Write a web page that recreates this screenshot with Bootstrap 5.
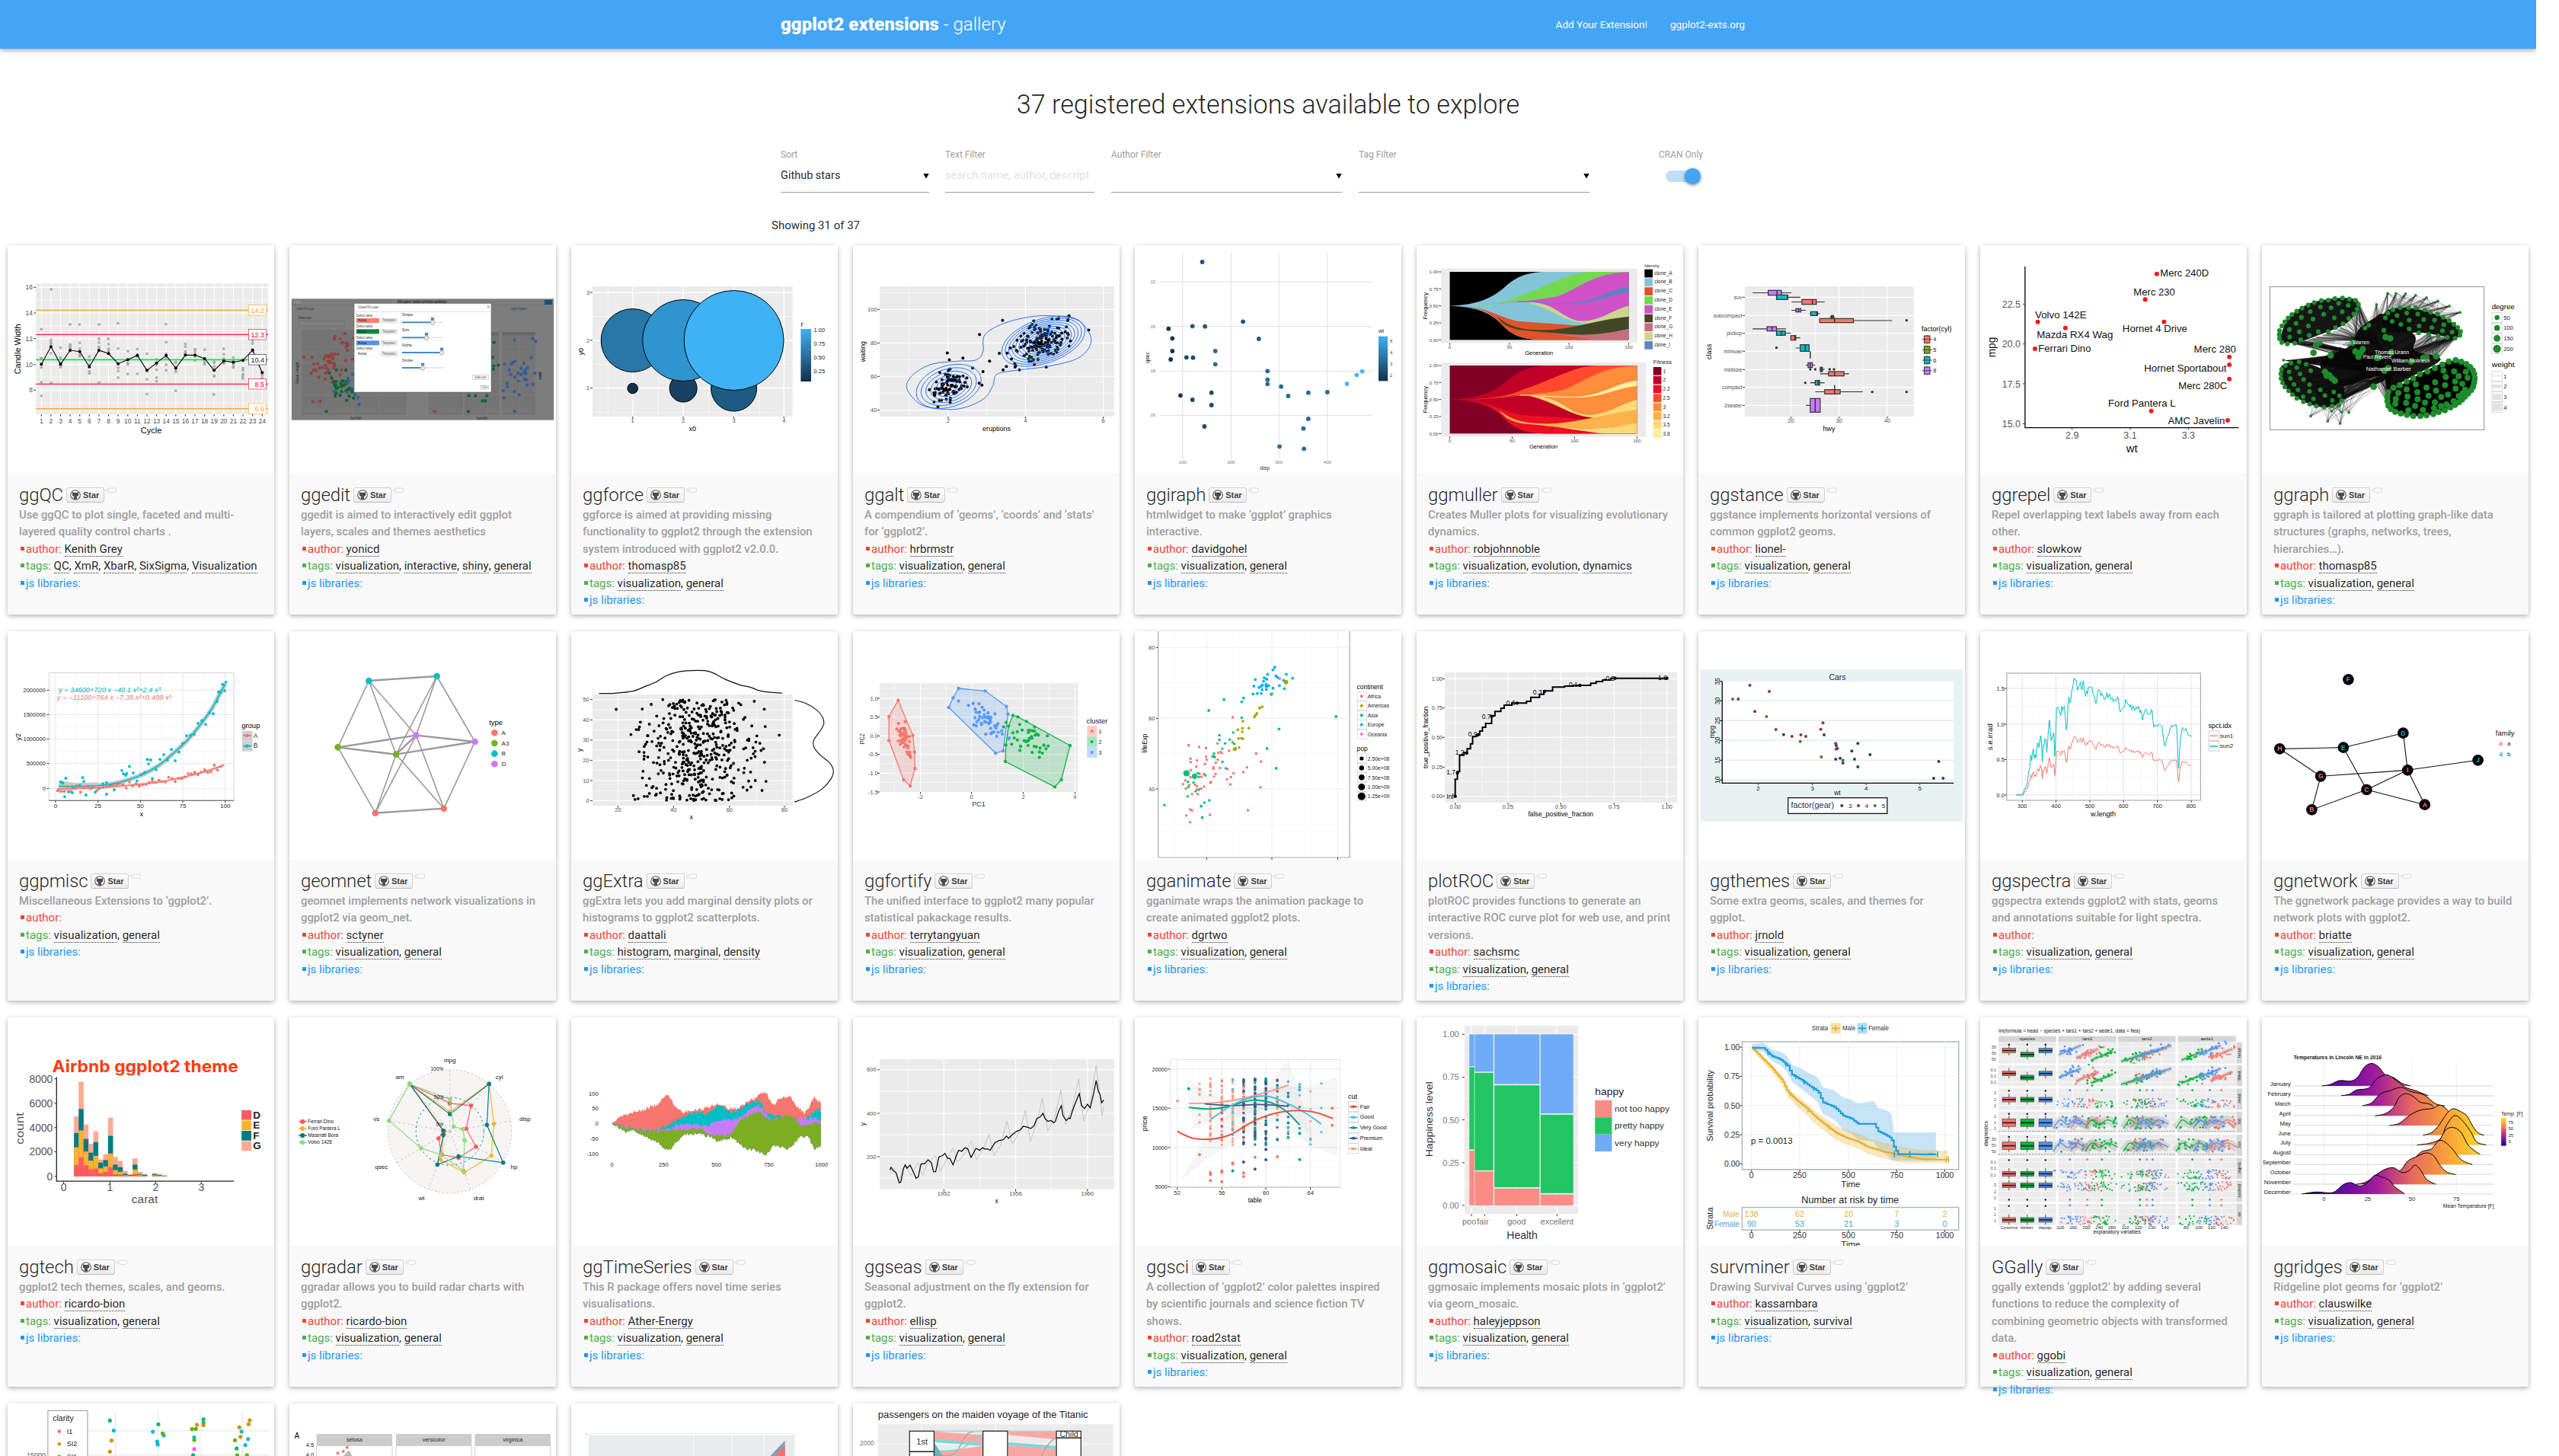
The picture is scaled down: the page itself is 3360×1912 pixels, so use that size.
<!DOCTYPE html>
<html lang="en">
<head>
<meta charset="utf-8">
<title>ggplot2 extensions - gallery</title>
<link href="https://cdn.jsdelivr.net/npm/bootstrap@5.3.0/dist/css/bootstrap.min.css" rel="stylesheet">
<style>
html,body{height:100%}
body{font-family:Roboto,"Liberation Sans",sans-serif;color:rgba(0,0,0,.87);font-size:15px;line-height:1.5;background:#fff}
.page{width:3330px;height:1912px}
.page>*{flex-shrink:0}
.topbar{height:64px;background:#42a5f5;box-shadow:0 2px 5px rgba(0,0,0,.22),0 2px 10px rgba(0,0,0,.16)}
.inner{width:1280px}
.topbar .inner{padding-right:14px}
.brand{font-size:24px;font-weight:300;line-height:65px;color:#fff;white-space:nowrap}
.brand b{font-weight:900}
.links a{font-size:13.5px;color:#fff;line-height:64px;white-space:nowrap}
.links a+a{margin-left:30px}
.headline{font-size:34.2px;font-weight:300;line-height:40px;margin-top:53px}
.filters{width:1280px;height:87px;margin-top:38px}
.fld{height:58px;border-bottom:1px solid #9e9e9e}
.fld label,.sw label{display:block;font-size:12px;line-height:16px;color:#9e9e9e;white-space:nowrap}
.fld .val{font-size:14.5px;line-height:20px;height:20px;margin-top:10px;overflow:hidden;white-space:nowrap}
.fld .ph{color:#e2e2e2}
.arr{width:8px;height:7px;background:#000;clip-path:polygon(0 0,100% 0,50% 100%)}
.track{width:38px;height:15px;border-radius:8px;background:#c0def4;margin:13px 0 0 9px}
.knob{width:21px;height:21px;border-radius:50%;background:#42a5f5;box-shadow:0 1px 4px rgba(0,0,0,.5);margin:-3px -8px 0 0;flex:none}
.showing{width:1304px;font-size:15px;line-height:23px;margin-top:3px;margin-bottom:1px}
.gallery{padding-top:13px}
.tile{width:350px;height:485px;margin:0 10px 22px 10px;background:#f9f9f9;border:0;border-radius:2px;box-shadow:0 2px 5px rgba(0,0,0,.2),0 2px 10px rgba(0,0,0,.13)}
.cell{width:370px;height:507px;flex:none}
.pic{height:300px;background:#fff;border-radius:2px 2px 0 0;overflow:hidden}
.pic svg{display:block}
.info{padding:12px 15px 0;white-space:nowrap}
.nm{font-size:24px;font-weight:300;line-height:33px;height:30.5px;letter-spacing:-.1px}
.star{width:50px;height:20px;border:1px solid #d0d0d0;border-bottom-color:#bbb;border-radius:3px;background:linear-gradient(#fcfcfc,#ececec);font:bold 11px/18px "Liberation Sans",sans-serif;color:#444;padding-left:4px;margin-top:6px}
.star svg{margin:2px 3px 0 0}
.bub{margin:6px 0 0 1px}
.ln{font-size:15px;line-height:22.5px;height:22.5px}
.dsc{color:#9e9e9e;font-weight:500;font-size:14.8px}
.ln a{color:#212121;text-decoration:none;border-bottom:1px dotted #333;line-height:19px;display:inline-block;height:19px}
.sq{display:inline-block;width:5px;height:5px;margin:0 2px 3px 2px}
.c-r{color:#f44336}.c-g{color:#4caf50}.c-b{color:#2196f3}
.c-r .sq{background:#f44336}.c-g .sq{background:#4caf50}.c-b .sq{background:#2196f3}
.pic text{font-family:"Liberation Sans",Arial,sans-serif}
</style>
</head>
<body>
<div class="page d-flex flex-column overflow-hidden">
  <nav class="topbar d-flex justify-content-center">
    <div class="inner d-flex justify-content-between">
      <div class="brand"><b>ggplot2 extensions</b> - gallery</div>
      <div class="links d-flex"><a class="text-decoration-none">Add Your Extension!</a><a class="text-decoration-none">ggplot2-exts.org</a></div>
    </div>
  </nav>
  <h1 class="headline text-center mb-0">37 registered extensions available to explore</h1>
  <div class="filters mx-auto d-flex align-items-start">
    <div class="fld" style="width:195px"><label>Sort</label><div class="val d-flex justify-content-between align-items-center">Github stars<span class="arr"></span></div></div>
    <div class="fld" style="width:196px;margin-left:21px"><label>Text Filter</label><div class="val ph">search name, author, descript</div></div>
    <div class="fld" style="width:303px;margin-left:22px"><label>Author Filter</label><div class="val d-flex justify-content-end align-items-center"><span class="arr"></span></div></div>
    <div class="fld" style="width:303px;margin-left:22px"><label>Tag Filter</label><div class="val d-flex justify-content-end align-items-center"><span class="arr"></span></div></div>
    <div class="sw" style="margin-left:91px"><label>CRAN Only</label><div class="track d-flex justify-content-end"><div class="knob"></div></div></div>
  </div>
  <div class="showing mx-auto">Showing 31 of 37</div>
  <div class="gallery d-flex flex-wrap" id="gallery"></div>
</div>
<script>
const gallery=document.getElementById('gallery');
let seed=7;
const rnd=()=>{seed=(seed*16807)%2147483647;return seed/2147483647};
const gs=()=>Math.sqrt(-2*Math.log(rnd()))*Math.cos(6.2832*rnd());
const pts=s=>typeof s==='string'?s.trim().split(/\s+/).map(a=>a.split(',').map(Number)):s;
const at=(s,x)=>{const a=pts(s);if(x<=a[0][0])return a[0][1];for(let i=1;i<a.length;i++)if(x<=a[i][0]){const t=(x-a[i-1][0])/(a[i][0]-a[i-1][0]);return a[i-1][1]+t*(a[i][1]-a[i-1][1])}return a[a.length-1][1]};
const noisy=(s,amp,step)=>{const a=pts(s),o=[];for(let x=a[0][0];x<=a[a.length-1][0];x+=step)o.push([x,at(a,x)+(rnd()-.5)*2*amp]);return o};
/* Plot surface: data units (ox,oy,sx,sy) are mapped onto the 350x300 picture. */
class Plot{
  constructor(ox,oy,sx,sy){Object.assign(this,{ox,oy,sx,sy,h:''})}
  X(x){return +((x-this.ox)/this.sx).toFixed(2)}
  Y(y){return +((y-this.oy)/this.sy).toFixed(2)}
  P(s){return pts(s).map(a=>this.X(a[0])+','+this.Y(a[1])).join(' ')}
  r(a,b,c,d,f,st='none',w=1,o=1){this.h+=`<rect x="${this.X(a)}" y="${this.Y(b)}" width="${((c-a)/this.sx).toFixed(2)}" height="${((d-b)/this.sy).toFixed(2)}" fill="${f}" stroke="${st}" stroke-width="${w}" opacity="${o}"/>`}
  l(s,st='#000',w=1,dash='',o=1){this.h+=`<polyline points="${this.P(s)}" fill="none" stroke="${st}" stroke-width="${w}" stroke-dasharray="${dash}" opacity="${o}"/>`}
  pg(s,f,st='none',w=1,o=1){this.h+=`<polygon points="${this.P(s)}" fill="${f}" stroke="${st}" stroke-width="${w}" fill-opacity="${o}"/>`}
  d(x,y,r,f,o=1,st='none'){this.h+=`<circle cx="${this.X(x)}" cy="${this.Y(y)}" r="${r}" fill="${f}" stroke="${st}" opacity="${o}"/>`}
  ds(s,r,f,o=1){pts(s).forEach(a=>this.d(a[0],a[1],r,f,o))}
  cl(n,cx,cy,dx,dy,r,f,rho=0,o=1){for(let i=0;i<n;i++){const u=gs(),v=gs();this.d(cx+dx*u,cy+dy*(rho*u+Math.sqrt(1-rho*rho)*v),r,f,o)}}
  un(n,a,b,c,d,r,f,o=1){for(let i=0;i<n;i++)this.d(a+(c-a)*rnd(),b+(d-b)*rnd(),r,f,o)}
  s(s,st='#000',w=1,f='none',close=false,o=1,dash=''){const a=pts(s).map(q=>[this.X(q[0]),this.Y(q[1])]),n=a.length,g=i=>close?a[(i+n)%n]:a[Math.max(0,Math.min(n-1,i))];let d='M'+a[0];for(let i=0;i<(close?n:n-1);i++){const p0=g(i-1),p1=g(i),p2=g(i+1),p3=g(i+2);d+=`C${p1[0]+(p2[0]-p0[0])/6},${p1[1]+(p2[1]-p0[1])/6} ${p2[0]-(p3[0]-p1[0])/6},${p2[1]-(p3[1]-p1[1])/6} ${p2}`}this.h+=`<path d="${d}" fill="${f}" stroke="${st}" stroke-width="${w}" opacity="${o}" stroke-dasharray="${dash}"/>`}
  pa(d,f,x=''){this.h+=`<path d="${d}" fill="${f}" transform="scale(${1/this.sx} ${1/this.sy}) translate(${-this.ox} ${-this.oy}) ${x}"/>`}
  el(x,y,rx,ry,rot,f,st,w=1,o=1){this.h+=`<ellipse rx="${rx}" ry="${ry}" transform="translate(${this.X(x)} ${this.Y(y)}) rotate(${rot})" fill="${f}" stroke="${st}" stroke-width="${w}" opacity="${o}"/>`}
  t(x,y,s,z=8,f='#4d4d4d',an='start',w=0,ex=''){this.h+=`<text x="${this.X(x)}" y="${this.Y(y)}" font-size="${z}" fill="${f}" text-anchor="${an}" ${w?`textLength="${(w/this.sx).toFixed(1)}" lengthAdjust="spacingAndGlyphs"`:''} ${ex}>${s}</text>`}
  v(x,y,s,z=9,f='#000',len=0,ex=''){this.h+=`<text transform="translate(${this.X(x)} ${this.Y(y)}) rotate(-90)" font-size="${z}" fill="${f}" text-anchor="middle" ${len?`textLength="${(len/this.sy).toFixed(1)}" lengthAdjust="spacingAndGlyphs"`:''} ${ex}>${s}</text>`}
  vg(xs,a,b,c='#fff',w=1){xs.forEach(x=>this.l([[x,a],[x,b]],c,w))}
  hg(ys,a,b,c='#fff',w=1){ys.forEach(y=>this.l([[a,y],[b,y]],c,w))}
  xt(xs,ls,y,z=7,c='#4d4d4d',tick=0){xs.forEach((x,i)=>{this.t(x,y,ls[i],z,c,'middle');if(tick)this.l([[x,tick],[x,tick+8]],'#333',1)})}
  yt(x,ys,ls,z=7,c='#4d4d4d',tick=0){ys.forEach((y,i)=>{this.t(x,y+z*.36*this.sy,ls[i],z,c,'end');if(tick)this.l([[tick-4,y],[tick,y]],'#333',1)})}
  bar(a,b,c,d,id,c1,c2){this.h+=`<defs><linearGradient id="${id}" x2="0" y2="1"><stop stop-color="${c1}"/><stop offset="1" stop-color="${c2}"/></linearGradient></defs>`;this.r(a,b,c,d,`url(#${id})`)}
}
const seq=(a,n,s)=>Array.from({length:n},(_,i)=>a+i*s);
const RED='#f8766d',GRN='#7cae00',TEAL='#00bfc4',PUR='#c77cff',BG='#ebebeb';

const draw={
ggQC(p){
 p.r(66,186,493,702,BG);const xs=seq(76,24,17.65);p.vg(xs,186,702);p.hg([202,303,404,506,607],66,493,'#fff',1.4);p.hg([253,354,455,556,657],66,493,'#fff',.6);
 const m=[505,436,505,450,455,515,450,463,503,487,470,529,500,470,520,469,469,483,529,492,497,490,449,538];
 xs.forEach((x,i)=>{for(let k=0;k<5;k++)p.d(x,m[i]+gs()*32,1.9,'#aaa',.9)});
 p.ds('94,210 76,367 129,348 146,348 182,348 217,343 305,347 182,405 199,405 393,624 323,609 76,576 94,579 182,577 446,553',1.9,'#b0b0b0');
 p.hg([292,680],66,493,'#ffa21c',1.2);p.hg([388,583],66,493,'#ff1a2c',1.2);p.hg([487],66,493,'#00ee3c',1.6);
 p.l(m.map((y,i)=>[xs[i],y]),'#000',1.1);m.forEach((y,i)=>p.d(xs[i],y,2,'#000'));
 [[292,'14.2','#ffa21c'],[388,'12.3','#f02'],[487,'10.4','#222'],[583,'8.5','#f02'],[680,'6.6','#ffa21c']].forEach(([y,s,c])=>{p.r(457,y-20,489,y+20,'#fff',c,.6);p.t(486,y+10,s,9,c,'end')});
 p.xt(xs,seq(1,24,1),738,8.4,'#4d4d4d',702);p.yt(60,[202,303,404,506,607],[16,14,12,10,8],8.4,'#4d4d4d',66);
 p.t(278,777,'Cycle',11,'#000','middle');p.v(38,445,'Candle Width',11,'#000',198)},
ggedit(p){
 p.r(536,247,1018,725,'#7d7d7d');p.r(536,270,1018,272,'#727272');p.r(555,370,747,705,'#747474');[[788,851],[854,917],[923,984]].forEach(([a,b])=>{p.r(a,378,b,705,'#747474');p.r(a,378,b,391,'#686868')});
 p.vg([600,649,697,819,871,897,955],391,705,'#7f7f7f',.7);p.hg([435,500,562,626,690],555,984,'#7f7f7f',.7);
 p.r(538,252,556,268,'#8a8a8a','#666',.5);p.r(1001,251,1015,270,'#1f4f74');p.t(776,264,'Edit ggplot, themes and layer aesthetics',6,'#222','middle',90,'font-weight="bold"');p.t(545,292,'Update Plot Layer',5,'#24425c','start',32);p.t(939,291,'Layer Updates',5,'#24425c','start',30);
 p.t(548,327,'Choose a plot',5,'#222','start',24);p.r(549,334,633,354,'#808080','#666',.5);
 p.cl(42,600,505,22,45,2.2,'#96423d',-.4);p.cl(10,625,430,12,30,2.2,'#96423d');p.cl(34,632,585,18,35,2.2,'#0c6632');p.cl(16,655,600,18,35,2.2,'#345e9c');p.cl(30,957,545,16,55,2.2,'#345e9c');p.cl(6,910,470,4,30,2.2,'#0c6632');p.ds('862,629 874,629 895,629 887,649 892,649 861,691 600,691',2.2,'#0c6632');p.ds('799,691 634,384 575,652',2.2,'#96423d');p.ds('979,404 926,637 946,691',2.2,'#345e9c');
 ['#7a2d29','#0c6632','#345e9c'].forEach((c,i)=>p.d(993,541+i*10,2,c));p.t(654,722,'Sepal.Width',5,'#222','middle',20);p.t(886,722,'Sepal.Width',5,'#222','middle',20);p.v(549,540,'Sepal.Length',5,'#222');
 p.r(651,265,903,615,'#fff','#555',.5);p.t(658,286,'Update Plot Layer',6,'#444','start',38);p.t(895,285,'×',7,'#777');p.hg([298],651,903,'#ddd');
 [[317,'#ff7b70'],[360,'#008a3c'],[405,'#5590e8'],[448,'#fff']].forEach(([y,c])=>{p.t(655,y,'Select value',5,'#333','start',30);p.r(655,y+7,697,y+25,c,c=='#fff'?'#eee':'none',.5);p.t(658,y+20,'#setosa',5,'#222','start',16);p.r(700,y+7,730,y+25,'#eee','#ccc',.5);p.t(703,y+20,'Transparent',4.5,'#555','start',24)});
 [[316,795,'Shape'],[376,784,'Size'],[435,812,'Alpha'],[495,777,'Stroke']].forEach(([y,x,s])=>{p.t(739,y,s,5,'#333');p.r(739,y+22,815,y+26,'#ddd');p.r(739,y+21,x,y+27,'#428bca');p.r(x-3,y+5,x+3,y+16,'#428bca');p.d(x,y+25,2.6,'#eee',1,'#aaa');p.vg(seq(742,9,9),y+35,y+39,'#bbb',.6)});
 p.r(869,547,898,566,'#fff','#bbb',.6);p.t(872,560,'Update Layer',5,'#444','start',22);p.r(883,589,898,603,'#fff','#bbb',.6);p.t(885,599,'Close',5,'#2a7b9b','start',11)},
ggforce(p){
 p.r(1089,198,1457,711,BG);p.vg([1118,1210,1303,1396],198,711,'#fff',.6);p.hg([317,505,694],1089,1457,'#fff',.6);p.vg([1163,1256,1349,1441],198,711,'#fff',1.3);p.hg([222,411,599],1089,1457,'#fff',1.3);
 [[1163,600,6.8,'#13314c'],[1256,600,18,'#184260'],[1349,600,30,'#1d5b83'],[1163,411,41.5,'#2777a7'],[1256,411,53.5,'#3094cf'],[1349,411,65.5,'#3eb2f4']].forEach(a=>p.d(a[0],a[1],a[2],a[3],1,'#000'));
 p.xt([1163,1256,1349,1441],[1,2,3,4],736,7.5,'#4d4d4d',711);p.yt(1084,[222,411,599],[3,2,1],7.5,'#4d4d4d',1089);p.t(1273,768,'x0',9,'#000','middle');p.v(1073,455,'y0',9);
 p.t(1472,357,'r',9,'#000');p.bar(1472,366,1491,573,'gf','#3eb2f4','#12304a');[[378,'1.00'],[432,'0.75'],[486,'0.50'],[540,'0.25']].forEach(a=>p.t(1496,a[0],a[1],7.5,'#222'))},
ggalt(p){
 p.r(63,198,494,711,BG);p.vg([117,260,403],198,711,'#fff',.6);p.hg([223,355,487,619],63,494,'#fff',.6);p.vg([189,331,474],198,711,'#fff',1.2);p.hg([289,421,553,686],63,494,'#fff',1.2);
 p.cl(165,362,416,27,36,2,'#000',-.35);p.cl(92,191,590,16,33,2,'#000',-.2);p.ds('216,481 265,493 283,462 296,514 290,527 320,527 253,534 246,580 251,587 411,315 389,328 234,520',2,'#000');
 const b='#2a73f0';
 p.s('113,600 125,545 160,504 205,493 240,488 253,455 256,390 290,345 340,318 385,315 430,335 452,410 430,478 375,512 310,530 278,545 271,590 255,640 220,675 185,683 140,665',b,1,'none',true);
 for(let i=0;i<6;i++)p.el(190,592+i,(44-i*6.5),(27-i*3.9),-18,'none',b,.9);
 for(let i=0;i<11;i++)p.el(364,414,57-i*4.7,29-i*2.35,-19,'none',b,.9);
 p.xt([189,331,474],[2,4,6],736,7.5,'#4d4d4d',711);p.yt(58,[289,421,553,686],[100,80,60,40],7.5,'#4d4d4d',63);p.t(278,768,'eruptions',9,'#000','middle');p.v(37,455,'waiting',9,'#000',82)},
ggiraph(p){
 p.vg([620,709,797,886],66,880,'#e0e0e0');p.hg([181,356,532,706],576,969,'#e0e0e0');
 p.ds('656,102 731,337 638,355 661,356 760,405',2.9,'#25587d');p.ds('594,365 601,403 601,453 598,486 616,628',2.9,'#15364f');p.ds('627,478 639,479 638,645 660,750 673,617 673,666',2.9,'#1f4b6b');p.ds('680,453 680,505 776,532 776,566 776,583 801,593 814,630 851,617 886,615 851,720 842,758 798,829 843,838',2.9,'#2b6a94');p.ds('950,533 940,547 922,582',2.9,'#4fb9f7');
 p.xt([620,709,797,886],[100,200,300,400],898,6,'#777');p.yt(570,[181,356,532,706],[22,20,18,16],6,'#777');p.t(771,920,'disp',7,'#333','middle');p.v(558,478,'qsec',7);
 p.t(980,382,'wt',7,'#222');p.bar(980,395,997,571,'gi','#3eb2f4','#12304a');[[421,5],[465,4],[511,3],[556,2]].forEach(a=>p.t(1001,a[0],a[1],6,'#444'))},
ggmuller(p){
 const tops='M1111,275 C1165,272 1190,240 1210,205 C1230,165 1250,141 1290,141 L1440,141 L1440,409 L1290,409 C1240,409 1225,390 1205,345 C1180,290 1150,278 1111,275Z';
 const S=[tops,'M1135,277 C1180,280 1200,320 1235,335 C1270,340 1300,345 1340,352 C1360,352 1370,350 1400,345 L1440,409 L1290,409 C1240,409 1225,390 1205,345 C1190,310 1170,282 1135,277Z','M1150,275 C1190,268 1220,260 1240,235 C1290,200 1330,141 1370,141 L1440,141 L1440,143 C1380,150 1350,200 1325,225 C1290,255 1250,252 1210,262 C1190,270 1170,274 1150,275Z','M1180,272 C1250,252 1300,250 1320,228 C1350,200 1380,145 1440,142 L1440,275 C1410,290 1390,333 1355,335 C1320,333 1310,270 1265,262 C1240,257 1220,262 1180,272Z','M1235,256 C1290,262 1310,263 1330,264 C1380,262 1400,210 1440,200 L1440,222 C1400,232 1380,268 1330,267 C1300,267 1270,262 1235,258Z','M1250,260 C1300,285 1320,340 1365,346 C1400,340 1410,325 1440,317 L1440,275 C1410,290 1390,333 1355,335 C1320,333 1310,270 1265,262Z','M1198,318 C1220,355 1240,372 1290,370 C1340,365 1380,330 1440,317 L1440,366 C1400,385 1370,390 1350,389 C1300,385 1270,375 1240,370 C1215,360 1205,340 1198,318Z','M1230,368 C1280,375 1310,388 1350,389 C1380,390 1410,380 1440,366 L1440,409 L1380,409 C1340,400 1300,378 1230,368Z'];
 const A=['#84c4d8','#e0532a','#72d94f','#d050c8','#5a84c4','#cdd48c','#414626','#c76e7e'],B=['#c20026','#ec0f23','#fd4a2c','#fe8d3c','#fff0a0','#fed976','#feb24c','#fed976'];
 p.r(1095,128,1456,421,BG);p.r(1111,141,1440,409,'#000');S.forEach((d,i)=>p.pa(d,A[i]));
 p.r(1095,498,1472,790,BG);p.r(1111,510,1455,778,'#800026');S.forEach((d,i)=>p.pa(d,B[i],'translate(1111 369) scale(1.0456 1) translate(-1111 0)'));
 [[0,329],[369,344]].forEach(([o,w],k)=>{p.xt([0,1/3,2/3,1].map(f=>1111+w*f),[0,50,100,150],444+o,6.2,'#4d4d4d',421+o);p.yt(1090,[141,208,275,342,409].map(y=>y+o),['1.00','0.75','0.50','0.25','0.00'],6.2,'#4d4d4d',1095);p.t(1275+k*8,469+o,'Generation',7.5,'#000','middle');p.v(1070,275+o,'Frequency',8,'#000',106)});
 ['#000','#84c4d8','#e0532a','#72d94f','#d050c8','#414626','#c76e7e','#cdd48c','#5a84c4'].forEach((c,i)=>{p.r(1469,131+i*35.4,1484,163+i*35.4,c);p.t(1487,152+i*35.4,'clone_'+'ABCDEFGHI'[i],6.5,'#222')});p.t(1469,122,'Identity',6,'#222');
 p.t(1485,505,'Fitness',7.5,'#222');['#800026','#c20026','#ec0f23','#fd4a2c','#fe8d3c','#feb24c','#fed976','#ffeda0'].forEach((c,i)=>{p.r(1485,516+i*35.4,1500,548+i*35.4,c);p.t(1503,539+i*35.4,[1,2,2.2,2.5,3,3.2,3.5,3.8][i],6.5,'#222')})},
ggstance(p){
 p.r(98,198,403,711,BG);p.vg([138,225,311],198,711,'#fff',.6);p.vg([181,268,355],198,711,'#fff',1.2);p.hg([241,313,383,454,526,596,667],98,403,'#fff',1.2);
 [[112,182,140,164,156,214,233,PUR],[155,198,155,175,175,232,250,TEAL],[182,242,201,227,220,250,269,RED],[182,208,190,199,195,286,299,PUR],[215,233,217,229,228,298,313,TEAL],[251,260,254,258,256,313,325,GRN],[233,364,233,294,260,325,341,RED],[112,172,138,155,147,357,374,PUR],[155,181,155,171,164,374,391,TEAL],[181,198,181,190,188,392,410,RED],[190,214,198,214,207,428,454,TEAL],[208,225,212,220,216,499,518,PUR],[233,242,234,238,236,517,534,TEAL],[234,286,249,277,260,534,551,RED],[216,242,225,233,230,569,587,TEAL],[225,311,242,270,260,605,622,RED],[208,233,216,234,225,640,694,PUR]].forEach(([a,b,c,d,m,y1,y2,f])=>{p.l([[a,(y1+y2)/2],[b,(y1+y2)/2]],'#333',1.2);p.r(c,y1,d,y2,f,'#333',1.2);p.l([[m,y1],[m,y2]],'#333',1.5)});
 p.l('216,454 216,482','#333',1.5);p.l('260,587 260,605','#333',1.5);p.ds('390,332 155,440 216,525 225,525 251,525 259,525 207,578 328,614 390,614',1.7,'#333');
 p.xt([181,268,355],[20,30,40],736,7.5,'#4d4d4d',711);p.yt(93,[241,313,383,454,526,596,667],['suv','subcompact','pickup','minivan','midsize','compact','2seater'],7,'#4d4d4d',98);p.t(250,768,'hwy',9,'#000','middle');p.v(37,455,'class',9);
 p.t(417,376,'factor(cyl)',9,'#000');[RED,GRN,TEAL,PUR].forEach((c,i)=>{const y=407+i*41;p.r(418,y-18,436,y+18,'#f2f2f2');p.l([[427,y-17],[427,y+17]],'#333');p.r(422,y-14,432,y+14,c,'#333');p.l([[418,y],[436,y]],'#333',.8);p.t(438,y+8,[4,5,6,8][i],7.5,'#222')})},
ggrepel(p){
 p.l('604,120 604,755 990,755','#000',1.3);p.ds('842,149 821,250 627,338 677,362 855,338 622,444 973,476 973,507 973,563 832,689 970,726',3,'#f8191c');
 [[848,160,'Merc 240D',88],[800,235,'Merc 230',75],[622,323,'Volvo 142E',93],[780,378,'Hornet 4 Drive',117],[625,402,'Mazda RX4 Wag',138],[628,456,'Ferrari Dino',95],[909,460,'Merc 280',76],[819,535,'Hornet Sportabout',149],[881,602,'Merc 280C',88],[754,673,'Ford Pantera L',122],[862,740,'AMC Javelin',103]].forEach(a=>p.t(a[0],a[1],a[2],13,'#111','start',a[3]));
 p.xt([689,794,899],[2.9,3.1,3.3],799,12.5,'#555',755);p.yt(596,[268,425,582,739],['22.5','20.0','17.5','15.0'],12.5,'#555',604);p.t(797,851,'wt',15,'#111','middle');p.v(550,438,'mpg',15,'#111',80)},
ggraph(p){
 Object.assign(p,{ox:0,oy:-114,sx:3,sy:3});const g='#1d8b2b';
 p.r(31,50,875,613,'#fff','#777',.8);
 const fan=(tips,a,b,c,d,n,o)=>pts(tips).forEach(q=>{for(let i=0;i<n;i++)p.l([q,[a+(c-a)*rnd(),b+(d-b)*rnd()]],'#222',.8,'',o)});
 const span=(a,b,n,o)=>{const A=pts(a),B=pts(b);for(let i=0;i<n;i++){const u=rnd()*(A.length-1),v=rnd()*(B.length-1),k=u|0,m=v|0,e=u-k,f=v-m;p.l([[A[k][0]+(A[k+1][0]-A[k][0])*e,A[k][1]+(A[k+1][1]-A[k][1])*e],[B[m][0]+(B[m+1][0]-B[m][0])*f,B[m][1]+(B[m+1][1]-B[m][1])*f]],'#111',.8,'',o)}};
 fan('495,76 528,76 565,78 605,84 648,93 693,106 738,126 780,151 451,120',390,180,500,340,16,.3);
 fan('495,76 528,76 565,78 605,84 648,93 693,106 738,126 780,151',500,120,760,200,5,.3);
 fan('192,559 259,579 308,588 274,540 314,544 342,545',200,430,440,500,9,.35);
 span('375,100 378,140 300,220 150,270','360,260 420,250 480,300',150,.32);
 span('70,240 130,275 230,270','350,300 450,330 500,380',90,.3);
 span('90,340 140,345 240,330 360,250','400,300 480,340 480,400',160,.5);
 span('780,235 760,250 640,240','480,330 560,340 700,330',160,.35);
 span('310,500 250,510 150,400','440,300 500,380 480,420',170,.45);
 span('490,500 500,450 600,400','380,330 480,360 520,330',150,.45);
 p.s('350,280 380,220 440,175 485,160 600,240 600,300 690,325 690,350 560,420 500,470 480,405 420,410 300,440 230,350','none',0,'#050505',true,.93);
 p.s('85,210 110,165 190,115 290,95 370,100 378,135 330,195 210,245 130,270 75,265','none',0,'#0a0a0a',true,.95);
 p.s('485,150 560,132 650,148 740,185 785,230 760,250 640,232 560,230 480,220','none',0,'#080808',true,.95);
 p.s('80,360 145,345 250,380 320,440 310,500 250,525 170,505 100,455 72,400','none',0,'#0a0a0a',true,.95);
 p.s('500,470 560,430 700,355 780,345 840,400 820,460 740,525 640,558 550,550 495,520','none',0,'#000',true);
 p.ds('78,204 90,188 103,173 118,159 137,146 158,134 182,122 206,112 234,104 261,102 287,96 317,94 344,98 368,103 380,119 375,138 362,157 342,174 319,195 290,210 261,227 222,227 186,241 153,258 129,272 100,275 78,269 69,254 68,238 69,222 108,218 109,248 134,194 147,227 155,170 183,204 190,147 201,177 230,129 243,158 272,132 285,172 302,115 316,148 340,123',3.1,g);
 p.ds('496,153 516,140 545,132 578,132 606,132 642,141 664,150 692,157 714,170 738,183 756,197 771,210 782,226 780,241 761,252 730,249 694,244 656,237 618,231 580,216 547,198 513,186 486,172 480,221 532,163 570,153 580,181 614,157 619,204 637,179 669,210 680,181 711,223 716,199 749,228',3.1,g);
 p.ds('92,360 115,350 146,346 174,355 77,375 74,393 75,411 81,428 90,445 105,460 120,475 137,490 163,503 188,512 214,520 244,524 276,520 303,516 314,498 305,479 283,464 230,456 187,435 192,380 150,393 137,368 107,385 112,411 126,434 142,456 164,415 162,483 187,462 203,491 248,478 277,497',3,g);
 p.ds('497,466 518,448 543,437 570,423 596,411 622,394 652,383 681,370 711,356 736,344 763,339 785,345 805,354 820,366 830,379 836,394 838,411 836,427 832,443 824,457 812,470 800,482 788,494 776,505 760,515 742,525 720,536 696,543 675,551 648,556 624,559 596,559 571,554 547,549 525,542 508,532 498,518 494,500 494,484 527,491 537,468 570,454 573,482 606,434 612,465 613,493 648,447 656,479 682,426 686,459 681,505 706,484 715,380 721,437 724,405 727,513 733,475 757,383 761,423 763,451 775,402 789,432 803,385 810,408 800,455 525,511 568,507 577,536 603,519 634,535 642,506 678,528 705,520 790,470 775,480 755,500',4,g);
 p.ds('355,271 397,296 388,310 368,305 380,325 510,308 453,330 460,328 487,248 505,253 271,320 248,385 255,400 265,398 275,410 287,420 588,344 636,330 647,328 686,323 497,370 482,380 440,444 203,310 213,279',4.3,g);p.ds('230,272 421,201 406,212',3,g);
 p.ds('495,76 528,76 565,78 605,84 648,93 693,106 738,126 780,151 451,120 192,559 259,579 308,588 274,540 314,544 342,545 85,339',1.9,g);
 [[285,276,'Joseph Warren',138],[444,315,'Thomas Urann',135],[398,334,'Paul Revere',112],[510,349,'William Molineux',152],[410,380,'Nathaniel Barber',178]].forEach(a=>p.t(a[0],a[1],a[2],6.4,'#fff','start',a[3]));
 p.t(905,139,'degree',9,'#000','start',90);[50,100,150,200].forEach((s,i)=>{p.r(906,152+i*41,946,191+i*41,'#fff','#ccc',.8);p.d(926,171+i*41,3.2+i*.65,g);p.t(952,179+i*41,s,7.5,'#222')});
 p.t(905,367,'weight',9,'#000','start',90);[1,2,3,4].forEach((s,i)=>{p.r(906,382+i*41,946,421+i*41,'#fff','#ccc',.8);const k=[2,7,12,15][i];p.r(909,401+i*41-k,943,401+i*41+k,'#e3e3e3');p.t(952,410+i*41,s,7.5,'#222')})},
ggpmisc(p){
 p.r(90,191,430,693,'#fff','#c8c8c8',.8);p.vg([102,180,258,336,414],191,693,'#e6e6e6');p.hg([259,355,452,548,646],90,430,'#e6e6e6');p.vg([141,219,297,375],191,693,'#f4f4f4',.7);p.hg([210,307,403,500,597],90,430,'#f4f4f4',.7);p.l('90,694 430,694','#777',1.2);
 const T='108,638 150,638 190,633 220,622 258,595 290,558 320,505 345,455 370,390 390,330 405,270 414,235',R='105,648 180,643 240,633 290,622 330,605 370,584 400,563 412,553';
 p.s(T,'#c9c9c9',6);p.pg('108,615 140,625 180,622 180,646 140,650 108,662','#c9c9c9');p.s(R,'#ddd',3);p.s(T,TEAL,1.7);p.s(R,RED,1.7);
 for(let x=112;x<414;x+=7)p.d(x,at(T,x)+gs()*17,1.9,TEAL);for(let x=106;x<412;x+=6)p.d(x,at(R,x)+gs()*7,1.9,RED);p.ds('121,606 133,663 152,604 158,672 196,669 115,625 271,532 277,534 227,589 233,587 415,228 409,236 402,266',2,TEAL);
 p.t(108,266,'y = 34600+720 x −40.1 x²+2.4 x³',9,'#00b2b8','start',187,'font-style="italic"');p.t(105,296,'y = −11100+764 x −7.39 x²+0.499 x³',9,RED,'start',210,'font-style="italic"');
 p.xt([102,180,258,336,414],[0,25,50,75,100],724,8,'#222',694);p.yt(84,[259,355,452,548,646],['2000000','1500000','1000000','500000','0'],7.6,'#222',90);p.t(260,756,'x',9,'#000','middle');p.v(38,443,'y2',9);
 p.t(444,408,'group',9.5,'#000');[RED,TEAL].forEach((c,i)=>{p.r(445,419+i*41,464,459+i*41,'#cfcfcf');p.l([[447,438+i*41],[462,438+i*41]],c,2);p.d(454,438+i*41,2.2,c);p.t(466,446+i*41,'AB'[i],8.5,'#222')})},
geomnet(p){
 ['678,222 803,204','621,484 765,437','765,437 873,462','621,484 728,512','728,512 873,462','690,743 816,725','765,437 728,512'].forEach(s=>p.l(s,'#999',2.4));
 ['678,222 621,484','678,222 765,437','678,222 728,512','803,204 873,462','803,204 765,437','803,204 728,512','621,484 690,743','765,437 690,743','728,512 690,743','765,437 816,725','728,512 816,725','873,462 816,725'].forEach(s=>p.l(s,'#999',1.6));
 p.ds('678,222 803,204',4.3,TEAL);p.ds('765,437 873,462',4.3,PUR);p.ds('621,484 728,512',4.3,'#78b026');p.ds('690,743 816,725',4.3,RED);
 p.t(899,396,'type',9.5,'#000');[[RED,'A'],['#78b026','A3'],[TEAL,'B'],[PUR,'D']].forEach(([c,s],i)=>{p.d(909,427+i*41,4.3,c);p.t(922,435+i*41,s,8,'#222')})},
ggExtra(p){
 p.r(1089,276,1457,714,BG);p.vg([1187,1289,1391],276,714,'#fff',.6);p.hg([336,416,495,575,655],1089,1457,'#fff',.6);p.vg([1136,1238,1341,1442],276,714,'#fff',1.2);p.hg([296,376,455,535,615,694],1089,1457,'#fff',1.2);
 for(let i=0;i<460;i++){let x=1285+gs()*52;if(x<1105||x>1445)x=1285;p.d(x,296+rnd()*398,1.9,'#000')}
 p.s('1101,272 1130,271 1165,262 1185,245 1205,228 1225,202 1245,188 1270,182 1295,182 1310,190 1335,218 1360,238 1380,248 1400,263 1438,271','#111',1.2);
 p.s('1461,298 1480,310 1500,335 1512,365 1514,395 1504,430 1496,455 1496,482 1508,515 1525,545 1532,578 1527,610 1510,650 1485,680 1460,700','#111',1.1);
 p.xt([1136,1238,1341,1442],[20,40,60,80],739,7.5,'#4d4d4d',714);p.yt(1083,[296,376,455,535,615,694],[50,40,30,20,10,0],7.5,'#4d4d4d',1089);p.t(1271,769,'x',9,'#000','middle');p.v(1069,495,'y',9)},
ggfortify(p){
 p.r(63,232,428,660,BG);p.vg([90,185,280,374],232,660,'#fff',.6);p.hg([254,328,402,475,549,622],63,428,'#fff',.6);p.vg([138,232,327,422],232,660,'#fff',1.2);p.hg([291,365,439,512,586],63,428,'#fff',1.2);
 [['80,363 97,299 124,437 127,503 128,567 119,636 107,612 80,457',RED],['208,252 257,262 296,323 299,353 290,498 276,507 190,327 198,289','#5499fb'],['308,358 317,364 413,477 397,612 385,640 294,540 295,475 300,400','#0cb548']].forEach(([s,c])=>{p.pg(s,c,c,1.3,.2);p.ds(s,2.2,c)});
 p.cl(48,107,450,6,42,2.1,RED,.5);p.cl(48,262,390,18,38,2.1,'#5499fb',.6);p.cl(44,338,455,21,36,2.1,'#0cb548',.5);
 p.xt([138,232,327,422],[-2,0,2,4],687,7.5,'#4d4d4d',660);p.yt(60,[291,365,439,512,586,660],['1.0','0.5','0.0','-0.5','-1.0','-1.5'],7.5,'#4d4d4d',63);p.t(245,716,'PC1',9,'#333','middle');p.v(35,451,'PC2',9,'#333',42);
 p.t(443,389,'cluster',9.5,'#222');[RED,'#0cb548','#5499fb'].forEach((c,i)=>{p.r(445,401+i*42,462,439+i*42,c,c,1,.35);p.d(453,420+i*42,2,c);p.t(465,428+i*42,i+1,8,'#333')})},
gganimate(p){
 p.l('575,0 575,918 927,918 927,0','#aaa',1.2);p.vg([664,784,905],27,918,'#eee');p.hg([91,370,648],575,927,'#eee');p.vg([604,724,845],27,918,'#f6f6f6',.7);p.hg([230,508,787],575,927,'#f6f6f6',.7);
 p.cl(48,668,600,26,58,1.7,RED,-.35);p.cl(26,680,540,32,90,1.7,'#00bf7d',-.88);p.cl(20,738,420,22,90,1.8,'#a3a500',-.88);p.cl(30,772,242,20,28,1.9,'#00b0f6',-.6);
 p.ds('631,476 663,487 740,732 670,750 763,642 764,540 637,733 712,366 755,509',1.8,RED);p.ds('902,363 797,412 775,489 792,567 656,761 668,339 732,290 696,296 654,716',1.9,'#00bf7d');p.ds('786,179 822,212',1.9,'#00b0f6');p.d(627,586,4.2,'#00bf7d');p.d(642,598,3.6,'#00bf7d');p.d(810,227,3,'#a3a500');p.d(798,213,2,'#e76bf3');
 p.vg([664,784,905],918,927,'#333');p.yt(569,[91,370,648],[80,60,40],7.5,'#4d4d4d',575);p.v(554,468,'lifeExp',9,'#000',75);
 p.t(940,255,'continent',8.5,'#000');[['Africa',RED],['Americas','#a3a500'],['Asia','#00bf7d'],['Europe','#00b0f6'],['Oceania','#e76bf3']].forEach(([s,c],i)=>{p.r(941,265+i*37.3,958,301+i*37.3,'#fff','#ccc',.7);p.d(949,283+i*37.3,2,c);p.t(960,291+i*37.3,s,6.8,'#222')});
 p.t(940,498,'pop',8.5,'#000');['2.50e+08','5.00e+08','7.50e+08','1.00e+09','1.25e+09'].forEach((s,i)=>{p.r(941,510+i*37.3,958,546+i*37.3,'#fff','#ccc',.7);p.d(949,528+i*37.3,2.6+i*.6,'#000');p.t(960,536+i*37.3,s,6.8,'#222','start',40)})},
plotROC(p){
 p.r(1102,189,1529,702,BG);p.vg([1170,1267,1364,1462],189,702,'#fff',.6);p.hg([271,387,503,619],1102,1529,'#fff',.6);p.vg([1121,1218,1315,1413,1510],189,702,'#fff',1.2);p.hg([214,329,445,562,677],1102,1529,'#fff',1.2);
 p.l('1121,677 1121,610 1125,610 1125,580 1129,580 1129,515 1137,515 1137,505 1143,505 1143,490 1149,490 1149,470 1153,470 1153,442 1160,442 1160,435 1166,435 1166,420 1171,420 1171,405 1177,405 1177,390 1188,390 1188,360 1194,360 1194,343 1205,343 1205,330 1211,330 1211,318 1225,318 1225,310 1252,310 1252,303 1260,303 1260,287 1276,287 1276,275 1284,275 1284,262 1300,262 1300,247 1322,247 1322,243 1338,243 1338,240 1370,240 1370,232 1380,232 1380,225 1392,225 1392,219 1407,219 1407,212 1510,212','#000',2);
 p.ds('1121,677 1125,585 1142,507 1163,435 1188,362 1235,310 1285,264 1350,240 1415,212 1510,212',2.2,'#000');[[1105,687,'Inf'],[1105,592,'1.7'],[1121,513,'1.2'],[1145,442,'0.9'],[1170,371,'0.7'],[1215,318,'0.6'],[1264,275,'0.3'],[1330,247,'0.1'],[1394,221,'-0.5'],[1490,220,'-1.9']].forEach(a=>p.t(a[0],a[1],a[2],8.5,'#000'));
 p.xt([1121,1218,1315,1413,1510],['0.00','0.25','0.50','0.75','1.00'],727,7.5,'#4d4d4d',702);p.yt(1098,[214,329,445,562,677],['1.00','0.75','0.50','0.25','0.00'],7.5,'#4d4d4d',1102);p.t(1315,757,'false_positive_fraction',9,'#000','middle',120);p.v(1071,445,'true_positive_fraction',8.5,'#000',245)},
ggthemes(p){
 p.r(18,178,491,776,'#e8f1f2');p.r(57,224,475,625,'#fff');p.hg([301,379,457,535,613],57,475,'#e3edef',1.5);p.l('57,224 57,625 475,625','#000',1.3);
 p.ds('168,434 241,435 263,477 265,488 302,469 291,499 262,531 270,527 296,531 275,546 302,561 324,513 448,540 439,606 456,606',2,'#1a476f');p.ds('107,240 142,264 86,294 116,343 154,414 183,441 199,435 208,441 235,413 239,388 262,469 263,491',2,'#90353b');p.ds('76,294 137,363 198,461 236,522 275,535',2,'#55752f');
 p.t(265,220,'Cars',10.5,'#1e2d53','middle');p.xt([122,220,317,414],[2,3,4,5],654,8,'#111',625);[[224,35],[301,30],[379,25],[457,20],[535,15],[613,10]].forEach(([y,s])=>{p.v(52,y,s,8.5,'#111');p.l([[52,y],[57,y]])});p.t(265,673,'wt',8.5,'#111','middle');p.v(43,424,'mpg',8.5,'#111');
 p.r(176,683,355,745,'#fff','#000',1.2);p.t(181,724,'factor(gear)',10,'#1e2d53','start',78);['#1a476f','#90353b','#55752f'].forEach((c,i)=>{p.d(273+i*30,714,2,c);p.t(285+i*30,723,i+3,8,'#111')})},
ggspectra(p){
 p.r(571,192,921,693,'#fff','#999',1);p.vg([599,660,721,782,843,904],192,693,'#e4e4e4');p.hg([252,393,532,672],571,921,'#e4e4e4');p.vg([629,690,752,813,874],192,693,'#f3f3f3',.7);p.hg([322,462,602],571,921,'#f3f3f3',.7);
 const E='600,670 607,630 612,570 617,500 625,505 632,450 635,520 640,425 644,490 648,400 652,500 656,400 658,540 661,310 669,345 675,305 679,420 683,270 686,310 691,225 700,245 709,240 714,290 719,245 725,255 732,310 737,262 743,290 752,275 765,300 772,292 776,345 786,305 798,335 810,330 817,375 819,340 834,348 836,405 845,395 851,395 856,480 862,440 868,400 878,395 881,590 884,460 888,410 895,415 899,440 905,440';
 const n=noisy(E,1,1.6).map(([x,y])=>[x,y+(rnd()-.5)*(x<660?60:x<760?38:x<835?24:10)*(x<612?.2:1)]);n.unshift([588,672],[600,672]);
 p.l(n.map(([x,y])=>[x,672-(672-y)/2]),RED,1);p.l(n,TEAL,1);
 p.xt([599,660,721,782,843,904],[300,400,500,600,700,800],723,7.5,'#222',693);p.yt(567,[252,393,532,672],['1.5','1.0','0.5','0.0'],7.5,'#222',571);p.t(745,755,'w.length',9,'#000','middle');p.v(545,443,'s.e.irrad',9,'#000',105);
 p.t(935,407,'spct.idx',9,'#000');[RED,TEAL].forEach((c,i)=>{p.r(936,420+i*41,954,457+i*41,'#fff','#ccc');p.l([[938,439+i*41],[952,439+i*41]],c,1.3);p.t(956,446+i*41,'sun'+(i+1),8,'#222')})},
ggnetwork(p){
 ['1064,490 1179,485','1179,485 1287,428','1287,428 1295,574','1064,490 1138,598','1138,598 1295,574','1295,574 1422,535','1179,485 1221,651','1138,598 1122,730','1122,730 1221,651','1221,651 1295,574','1221,651 1326,710','1295,574 1326,710'].forEach(s=>p.l(s,'#111',1.1));
 [['F',1188,217,1],['D',1287,428,1],['E',1179,485,1],['J',1422,535,1],['H',1064,490],['G',1138,598],['I',1295,574],['C',1221,651],['B',1122,730],['A',1326,710]].forEach(([s,x,y,b])=>{p.d(x,y,7.3,'#000');p.t(x,y+9,s,8.5,b?TEAL:RED,'middle',0,'font-weight="bold"')});
 p.t(1454,438,'family',9.5,'#111');[[RED,'a'],[TEAL,'b']].forEach(([c,s],i)=>{p.t(1460,477+i*41,'a',8.5,c,'start',0,'font-weight="bold"');p.t(1475,477+i*41,s,8,'#222')})},
ggtech(p){
 p.t(96,224,'Airbnb ggplot2 theme',21.5,'#ff3b12','start',342,'font-weight="bold" style="font-family:Inter"');p.l('104,240 104,605 430,605','#222',1.3);
 [[136,378,436,486,548],[144.6,256,352,427,521],[153.6,406,457,501,549],[162.6,474,505,533,563],[171.6,430,468,516,561],[180.6,529,540,560,577],[189.6,510,531,553,572],[198.6,382,446,508,556],[207.6,520,547,566,581],[216.6,534,556,572,582],[225.6,569,579,584,586],[234.6,580,584,586,587],[243.6,525,547,564,580],[252.6,573,580,583,586],[261.6,580,583,586,587],[279.6,577,580,584,587],[288.6,579,584,586,587],[297.6,584,586,587,587]].forEach(([x,g,f,e,d])=>{p.r(x,g,x+9.1,588,'#ffaa91');p.r(x,f,x+9.1,588,'#007a87');p.r(x,e,x+9.1,588,'#ffb22d');p.r(x,d,x+9.1,588,'#ff5a5f')});
 p.xt([117,202,286,370],[0,1,2,3],640,14,'#555',605);p.yt(97,[246,332,417,502,588],[8000,6000,4000,2000,0],13.8,'#555',104);p.t(266,683,'carat',15.5,'#555','middle');p.v(43,420,'count',15.5,'#555',112);
 ['#ff5a5f','#ffb22d','#007a87','#ffaa91'].forEach((c,i)=>{p.r(444,356+i*36.3,462,390+i*36.3,c);p.t(465,385+i*36.3,'DEFG'[i],13.5,'#222','start',0,'font-weight="bold"')})},
ggradar(p){
 p.h+=`<circle cx="${p.X(827)}" cy="${p.Y(430)}" r="81" fill="#f6f5f4" stroke="#bbb" stroke-dasharray="2 3"/><circle cx="${p.X(827)}" cy="${p.Y(430)}" r="44.5" fill="none" stroke="#0b8092" stroke-dasharray="2.5 3.5"/>`;
 '827,213 900,264 940,393 925,540 865,632 788,632 729,540 714,393 753,264'.split(' ').forEach(s=>p.l('827,430 '+s,'#c5c5c5',.9,'3 3'));
 [['#ffb22d','827,362 899,264 908,404 903,516 853,575 810,530 816,440 817,430 753,264'],['#ff5a5f','827,332 866,340 857,421 875,484 843,523 812,512 806,455 815,428 753,264'],['#077a85','827,370 899,264 895,408 925,540 843,518 804,547 815,443 815,428 753,264'],['#8bdc7e','827,318 834,414 851,422 854,462 852,568 810,512 774,489 715,393 753,264']].forEach(([c,s])=>{p.pg(s,'none',c,1.2);p.ds(s,2.8,c)});
 [['mpg',827,188],['cyl',918,246],['disp',965,393],['hp',945,561],['drat',880,671],['wt',775,671],['qsec',701,561],['vs',692,393],['am',735,246]].forEach(a=>p.t(a[1],a[2],a[0],8,'#111','middle'));p.t(815,217,'100%',6.5,'#111','end');p.t(816,315,'50%',6.5,'#111','end');p.t(815,413,'0%',6.5,'#111','end');
 [['#ff5a5f','Ferrari Dino'],['#ffb22d','Ford Pantera L'],['#077a85','Maserati Bora'],['#8bdc7e','Volvo 142E']].forEach(([c,s],i)=>{p.l([[549,396+i*24.4],[564,396+i*24.4]],c,1.5);p.d(556,396+i*24.4,3.1,c);p.t(566,402+i*24.4,s,6.4,'#111')})},
ggTimeSeries(p){
 const bot='1125,405 1150,432 1165,425 1185,450 1210,470 1228,500 1245,465 1260,440 1290,438 1320,465 1345,450 1370,490 1395,500 1408,515 1420,480 1450,492 1470,450 1485,445 1497,492 1510,478';
 const b=noisy(bot,6,2).reverse();
 [['1125,400 1140,380 1165,360 1185,355 1210,335 1228,300 1240,340 1255,365 1270,355 1295,352 1320,335 1340,350 1355,352 1385,315 1408,292 1420,335 1440,310 1450,305 1465,345 1480,365 1497,312 1510,328',RED],['1125,403 1160,420 1210,425 1250,385 1275,360 1300,365 1325,340 1345,365 1370,340 1395,318 1410,370 1450,378 1475,395 1500,355 1510,360',TEAL],['1125,403 1160,420 1210,430 1250,405 1300,412 1320,390 1350,390 1395,338 1415,385 1460,385 1510,388',PUR],['1125,403 1160,420 1210,432 1250,425 1290,420 1300,440 1340,445 1365,385 1395,360 1415,390 1450,375 1475,412 1500,400 1510,410','#7cae24']].forEach(([s,c])=>p.pg(noisy(s,7,2).concat(b),c));
 p.xt([1125,1220,1317,1413,1510],[0,250,500,750,1000],555,7.6,'#222');p.yt(1100,[297,350,403,456,510],[100,50,0,-50,-100],7.6,'#222')},
ggseas(p){
 p.r(63,177,494,633,BG);p.vg([115,247,378],177,633,'#fff',.6);p.hg([290,442,594],63,494,'#fff',1);p.vg([181,313,445],177,633,'#fff',1.2);p.hg([214,367,519],63,494,'#fff',1.2);
 p.l('82,580 90,560 100,605 105,560 112,550 120,585 133,540 142,585 150,545 165,515 175,570 190,515 198,488 206,540 222,500 232,463 241,530 255,485 264,440 273,515 285,480 297,395 307,475 320,430 331,357 340,465 352,400 362,315 372,430 385,380 396,285 405,405 417,350 429,246 438,395 450,330 461,198 468,310 472,375 475,340','#c4c4c4',1);
 p.l('82,566 84,556 88,568 93,575 99,611 102,608 107,560 110,548 113,560 119,549 123,565 130,595 134,590 139,545 146,543 152,530 158,540 162,572 166,572 172,520 178,516 183,508 188,525 192,525 198,548 205,510 208,497 214,500 220,488 225,492 231,522 240,490 247,497 252,487 256,492 262,492 266,497 275,470 283,462 290,460 296,447 300,455 308,440 315,430 322,425 327,412 333,415 341,420 347,410 352,385 358,380 363,367 367,385 372,395 378,392 383,400 386,395 392,360 397,340 400,375 406,392 411,383 413,386 418,355 424,325 430,298 434,340 440,350 445,335 450,348 456,300 461,252 465,290 468,300 471,330 475,320','#000',1.2);
 p.xt([181,313,445],[1952,1956,1960],655,7.6,'#4d4d4d',633);p.yt(57,[214,367,519],[600,400,200],7.6,'#4d4d4d',63);p.t(278,682,'x',8.5,'#000','middle');p.v(37,405,'y',8.5)},
ggsci(p){
 p.r(597,179,909,627,'#fff','#ddd',.8);p.vg([610,692,773,855],179,627,'#e9e9e9');p.hg([212,349,487],597,909,'#e9e9e9');p.vg([651,732,814],179,627,'#f5f5f5',.7);p.hg([280,418,555],597,909,'#f5f5f5',.7);
 p.pg('615,605 670,430 732,320 790,270 855,270 905,240 905,520 855,480 790,400 732,450 670,520','#888','none',1,.08);p.pg('625,240 670,300 732,330 773,270 814,180 835,300 860,450 800,340 720,380 640,420','#888','none',1,.08);p.l('597,626 909,626','#bbb');
 const cs=['#f39b7f','#3c5488','#00a087','#4dbbd5','#e64b35'];
 [[651,7,[0]],[671,26,[0]],[692,30,[0,0,4]],[712,38,[0,0,3]],[732,60,[1,1,0]],[753,56,[1,1,2]],[773,46,[1,1,2]],[794,22,[1,2,0]],[814,16,[1,2,3]],[835,8,[2,3]],[855,6,[3,0]],[875,3,[3]]].forEach(([x,n,c])=>{for(let i=0;i<n;i++)p.d(x,245+Math.pow(rnd(),1.1)*235,1.8,cs[c[i%c.length]],.85)});
 p.un(1,610,322,611,324,2,cs[0]);p.ds('651,512 671,575 671,582 671,603 692,607 692,569 692,574 712,541 712,545 732,589 732,576 753,521 794,519 895,349 895,409',2,'#ee7a66');p.ds('732,538 753,563 773,494 773,530',2,cs[1]);p.ds('712,569 835,529 631,281 835,437',2,cs[2]);
 p.s('631,332 680,330 730,315 780,290 815,268',cs[0],1.9);p.s('661,334 710,340 760,336 815,342',cs[1],1.9);p.s('631,346 670,352 705,342 745,322 780,328 810,360 835,408',cs[2],1.9);p.s('671,389 705,345 740,315 775,307 810,330 845,365 875,405',cs[3],1.9);p.s('610,430 640,455 680,456 710,440 745,400 780,372 820,358 860,362 896,385',cs[4],1.9);
 p.xt([610,692,773,855],[52,56,60,64],652,7.4,'#222',627);p.yt(592,[212,349,487,625],[20000,15000,10000,5000],7.2,'#222',597);p.t(753,680,'table',8.5,'#000','middle');p.v(555,403,'price',8.8,'#000',54);
 p.t(924,315,'cut',9,'#000');['Fair','Good','Very Good','Premium','Ideal'].forEach((s,i)=>{const c=[cs[4],cs[3],cs[2],cs[1],cs[0]][i];p.r(925,326+i*36.8,943,361+i*36.8,'#fff','#ccc',.7);p.l([[927,344+i*36.8],[941,344+i*36.8]],c,2);p.d(934,344+i*36.8,2,c);p.t(946,350+i*36.8,s,7.4,'#111')})},
ggmosaic(p){
 p.r(1138,59,1347,720,BG);p.vg([1151,1175,1234,1308],59,720,'#fff',1.2);p.hg([165,315,465,615],1138,1347,'#fff',.6);p.hg([90,240,390,540,690],1138,1347,'#fff',1.2);
 [[1147,1156,202,205,494,498],[1157,1191,221,225,567,571],[1193,1276,264,269,626,631],[1278,1338,367,372,647,652]].forEach(([a,b,y1,y2,y3,y4])=>{p.r(a,90,b,y1,'#6fabf7');p.r(a,y2,b,y3,'#22c563');p.r(a,y4,b,690,'#fb8b85')});
 p.t(1134,757,'poo',11,'#777');p.t(1161,757,'fair',11,'#777');p.xt([1234,1308],['good','excellent'],757,11,'#777');p.vg([1151,1175,1234,1308],720,728,'#444');p.yt(1128,[90,240,390,540,690],['1.00','0.75','0.50','0.25','0.00'],11,'#777',1138);
 p.t(1244,807,'Health',14,'#333','middle');p.v(1079,388,'Happiness level',13.5,'#333',264);p.t(1378,304,'happy',13.5,'#222','start',53);
 [['not too happy','#fb8b85',101],['pretty happy','#22c563',91],['very happy','#6fabf7',82]].forEach(([s,c,w],i)=>{p.r(1378,321+i*60,1409,381+i*60,c);p.t(1414,361+i*60,s,11,'#333','start',w)})},
survminer(p){
 p.t(219,77,'Strata',9,'#333','start',29);p.r(253,50,271,88,'#f5ddac');p.l('255,69 269,69',"#e7b02a",1.6);p.l('262,58 262,80',"#e7b02a",1.4);p.t(274,77,'Male',9,'#333','start',24);p.r(301,50,319,88,'#b5dcf3');p.l('303,69 317,69',"#1b9fda",1.6);p.l('310,58 310,80',"#1b9fda",1.4);p.t(321,77,'Female',9,'#333','start',37);
 p.r(93,116,484,564,'#fff','#a9b5b0',1.4);p.vg([110,197,285,372,459],116,564,'#f0f0f0');p.hg([135,237,340,442,544],93,484,'#f0f0f0');
 const step=a=>{const o=[];pts(a).forEach((q,i,r)=>{if(i)o.push([q[0],r[i-1][1]]);o.push(q)});return o};
 const F=noisy('111,137 132,138 145,165 162,178 175,200 182,230 200,250 215,272 230,290 238,328 260,345 275,375 290,385 302,404 332,404 338,430 350,440 362,455 368,490 375,510 446,511',.5,4),M=noisy('111,137 125,165 145,205 165,250 175,290 190,320 210,350 225,380 245,410 262,435 280,452 300,465 320,485 345,500 375,513 400,522 420,528 466,530',.5,3.5);
 p.pg(F.map(([x,y])=>[x,x<366?y-12-(x-111)*.31:434]).concat(F.map(([x,y])=>[x,Math.min(533,y+8+(x-111)*.25)]).reverse()),'#64b5e8','none',1,.36);p.pg(M.map(([x,y])=>[x,y-7-Math.min(25,(x-111)*.12)]).concat(M.map(([x,y])=>[x,Math.min(540,y+8+Math.min(16,(x-111)*.15))]).reverse()),'#e7b02a','none',1,.3);
 p.l(step(M),'#e7b02a',2);p.l(step(F),'#1b9fda',2.2);p.vg([368,396,446],500,522,'#1b9fda',1.5);p.vg([462,466],518,540,'#e7b02a',1.5);[140,172,190,205,222].forEach(x=>p.l([[x,at(F,x)-8],[x,at(F,x)+8]],'#1b9fda',1.6));[180,212,250].forEach(x=>p.l([[x,at(M,x)-8],[x,at(M,x)+8]],'#e7b02a',1.6));
 p.t(109,474,'p = 0.0013',11.5,'#222','start',75);p.xt([110,197,285,372,459],[0,250,500,750,1000],595,10.6,'#333',564);p.yt(89,[135,237,340,442,544],['1.00','0.75','0.50','0.25','0.00'],10.6,'#333',93);p.t(289,626,'Time',11.5,'#222','middle');p.v(40,340,'Survival probability',11.5,'#222',250);
 p.t(288,682,'Number at risk by time',13.5,'#222','middle',176);p.r(93,697,484,776,'#fff','#a9b5b0',1.4);const x=[110,197,285,372,459];[[138,62,20,7,2],[90,53,21,3,0]].forEach((a,i)=>{a.forEach((s,j)=>p.t(x[j],729+i*35,s,11,i?'#3fa9dd':'#e2b347','middle'));p.t(i?43:58,729+i*35,i?'Female':'Male',10.8,i?'#3fa9dd':'#e2b347','start',i?45:30)});p.v(40,736,'Strata',11.5,'#222',78);p.xt(x,[0,250,500,750,1000],806,10.6,'#333',776);p.t(289,836,'Time',11.5,'#222','middle')},
GGally(p){
 p.t(556,84,'lm(formula = head ~ species + tars1 + tars2 + aede1, data = flea)',7.5,'#111','start',256);
 const cx=[[556,660],[664,769],[772,876],[880,985]],ry=[[118,192],[199,272],[280,354],[361,435],[442,516],[523,597],[603,678],[684,759]],R='#f8766d',N='#00ba38',B='#4f93f7';
 cx.forEach(([a,b],i)=>{p.r(a,96,b,117,'#d5d5d5');p.t((a+b)/2,110,['species','tars1','tars2','aede1'][i],6,'#222','middle')});
 ry.forEach(([c,d],j)=>{p.r(986,c,996,d,'#d5d5d5');p.v(994,(c+d)/2,['head','fitted','.resid','.std','.hat','.sigma','.cooksd','se'][j],5.5,'#222');[.2,.5,.8].forEach(f=>p.t(552,c+f*(d-c)+6,['50','0.1','2','1'][j%4],5.5,'#444','end'));
 cx.forEach(([a,b],i)=>{p.r(a,c,b,d,BG);p.hg([.2,.5,.8].map(f=>c+f*(d-c)),a,b,'#fff',.7);p.vg([.25,.5,.75].map(f=>a+f*(b-a)),c,d,'#fff',.7);const m=(c+d)/2;
  if(i==0){[[575,R],[608,N],[641,B]].forEach(([x,col],k)=>{const y=j<2?m-8+(k==1?14:0):j>4?d-18-(j==6?40:0):m+2,h=j==3||j==4?13:8;p.l([[x,y-h-12],[x,y+h+9]],'#333',.8);p.r(x-12,y-h,x+12,y+h,col,'#333',.6);p.l([[x-12,y],[x+12,y]],'#222',1.8);if(j!=1)p.d(x,j==6?d-8:c+8,1.2,'#111')})}
  else [R,N,B].forEach((col,k)=>{const X=a+(i==1?[.5,.75,.2][k]:i==2?[.5,.38,.6][k]:[.75,.25,.55][k])*(b-a),s=13;
   if(j<2){const w=i==2?34:20,y=m+(i==2?[4,10,-6][k]:[2,10,-10][k]);p.l([[X-w,y+(i==2?20:16)],[X+w,y-(i==2?20:16)]],'#aaa',5,'',.45);p.cl(18,X,y,s,12,1.4,col,-.7);p.l([[X-w,y+(i==2?20:16)],[X+w,y-(i==2?20:16)]],col,1.5)}
   else if(j==3||j==4){p.s([[X-30,m+22],[X-18,m-4],[X-4,m+8],[X+10,m-8],[X+28,m+12]],'#aaa',11,'none',false,.35);p.s([[X-30,m+22],[X-18,m-8],[X-4,m+8],[X+10,m-8],[X+28,m+6]],col,1.3);p.un(18,X-26,c+14,X+26,d-14,1.4,col)}
   else{const y=j==6?c+18:j>4?d-18:m+12;for(let q=0;q<22;q++){const x=X+gs()*14,yy=y+(rnd()-.5)*32;p.r(x,yy,x+2.6,yy+5,col)}p.d(X,j==6?d-8:c+6,1.4,col)}});
  if(j==3||j==4)p.l([[a,d-5],[b,d-5]],'#888',.9,'2 2')})});
 p.xt([575,608,641],['Concinna','Heikert.','Heptap.'],773,5.2,'#222');p.xt([668,691,715,738,761,785,809,833,857,895,918,941,964],[120,160,200,240,280,110,120,130,140,80,100,120,140],773,6,'#222');p.t(770,790,'explanatory variables',6.6,'#111','middle');p.v(537,438,'diagnostics',6.6)},
ggridges(p){
 p.h+=`<defs><linearGradient id="plasma" gradientUnits="userSpaceOnUse" x1="${p.X(1104)}" x2="${p.X(1435)}"><stop stop-color="#120789"/><stop offset=".3" stop-color="#7e10a6"/><stop offset=".42" stop-color="#a62098"/><stop offset=".6" stop-color="#e4695e"/><stop offset=".8" stop-color="#fca338"/><stop offset="1" stop-color="#f8df25"/></linearGradient></defs>`;
 p.vg([1144,1223,1303,1383],188,655,'#eee');p.t(1089,178,'Temperatures in Lincoln NE in 2016',7.8,'#111','start',159,'font-weight="bold"');
 const M=['January','February','March','April','May','June','July','August','September','October','November','December'];
 const S=['1140,271 1155,266 1172,252 1192,254 1205,240 1217,205 1230,192 1243,205 1255,233 1270,242 1285,262 1300,271','1175,305 1190,300 1203,285 1225,278 1240,245 1257,232 1272,248 1290,275 1310,288 1332,305','1213,341 1230,330 1245,300 1262,288 1283,276 1300,290 1325,303 1345,333 1362,341','1236,376 1255,368 1270,345 1280,310 1292,298 1305,308 1318,328 1335,335 1350,355 1368,376','1262,410 1280,402 1300,372 1320,355 1340,350 1353,338 1365,352 1378,380 1395,410','1323,444 1338,435 1352,408 1365,370 1377,351 1390,360 1402,376 1412,410 1422,435 1433,444','1312,478 1335,472 1355,455 1365,410 1380,375 1395,395 1410,435 1420,468 1437,478','1322,512 1340,500 1352,465 1364,425 1378,417 1392,435 1405,480 1426,512','1290,547 1305,530 1320,502 1338,492 1350,465 1360,465 1375,490 1392,530 1412,547','1250,582 1280,570 1295,535 1310,520 1328,506 1342,516 1352,545 1365,572 1382,582','1202,616 1220,608 1240,580 1255,563 1270,558 1285,575 1298,568 1308,549 1318,565 1330,600 1346,616','1104,650 1130,643 1160,645 1178,618 1192,610 1208,622 1222,612 1235,585 1248,590 1262,602 1272,625 1290,650'];
 S.forEach((s,i)=>{const y=271+i*34.45;p.hg([y],1089,1450,'#e2e2e2',1.4);p.s(s,'#000',1,'url(#plasma)');p.t(1084,y,M[i],7.6,'#111','end')});
 p.xt([1144,1223,1303,1383],[0,25,50,75],675,7.6,'#222');p.t(1451,699,'Mean Temperature [F]',7.8,'#111','end',92);
 p.t(1464,375,'Temp. [F]',7.4,'#222','start',39);p.h+=`<defs><linearGradient id="pb" x2="0" y2="1"><stop stop-color="#f8e425"/><stop offset=".3" stop-color="#f48a4b"/><stop offset=".6" stop-color="#b3308c"/><stop offset="1" stop-color="#120789"/></linearGradient></defs>`;p.r(1464,382,1473,481,'url(#pb)');[[404,75],[427,50],[449,25],[471,0]].forEach(a=>p.t(1477,a[0],a[1],5.8,'#111'))},
rowA(p){
 p.vg([212,290,368,446],1410,1600,'#e6e6e6');p.hg([1480,1565],88,494,'#e6e6e6');const C=['#f8766d','#d39200','#5eb300','#00ba6c','#00bcd8','#ff61cc'];
 p.ds('202,1444 291,1457 374,1440 374,1453 435,1542 355,1565',2.6,C[3]);p.ds('209,1479 281,1483 289,1518 290,1528 301,1496 357,1503 444,1483 456,1509 451,1530',2.6,C[4]);p.ds('205,1514 202,1553 362,1459 374,1460 459,1443 457,1457 440,1468 442,1501',2.6,C[1]);p.ds('299,1489 353,1474 360,1473 357,1512 432,1513 454,1565 436,1566',2.6,C[2]);p.d(357,1544,2.6,C[5]);
 p.r(88,1409,161,1600,'#fff','#999');p.t(97,1446,'clarity',10.5,'#222');['I1','SI2','SI1'].forEach((s,i)=>{p.d(109,1482+i*44.5,2.4,C[i]);p.t(123,1490+i*44.5,s,9,'#222')});p.t(84,1573,'15000',9,'#555','end')},
rowB(p){
 p.t(541,1506,'A',10,'#000','start',0);[[582,721,'setosa'],[728,867,'versicolor'],[873,1012,'virginica']].forEach(([a,b,s])=>{p.r(a,1491,b,1531,'#ccc');p.r(a,1532,b,1620,'#fff','#bbb',.7);p.t((a+b)/2,1517,s,7,'#222','middle')});p.ds('638,1538 631,1552 621,1558 641,1556',2,RED);p.pg('630,1570 641,1548 648,1570','#bbb');p.t(577,1537,'4.5',7.5,'#222','end');p.t(577,1570,'4.0',7.5,'#222','end')},
rowC(p){p.r(1082,1488,1461,1600,'#e9ecec');p.hg([1493],1082,1461,'#fff',1.4);p.vg([1275,1345,1405],1488,1600,'#fff',.8);p.pg('1400,1600 1443,1514 1443,1600','#7ba0cd');p.pg('1405,1600 1443,1531 1443,1600','#f1736c');p.t(1077,1497,'-',7,'#333')},
rowD(p){
 p.t(60,1434,'passengers on the maiden voyage of the Titanic',12.5,'#222','start',386);p.r(60,1457,492,1600,BG);p.vg([140,276,411],1457,1600,'#fff');p.hg([1526],60,492,'#fff');p.pg('163,1482 253,1495 253,1525 163,1509','#f8a8a4');p.pg('163,1509 253,1523 253,1533 163,1520','#7fd6d8');p.pg('163,1555 253,1533 253,1600 163,1600','#f8a8a4');p.pg('299,1482 388,1482 388,1510 299,1494','#f8a8a4');p.pg('299,1520 388,1533 388,1545 299,1531','#7fd6d8');p.pg('299,1531 388,1545 388,1600 299,1600','#f8a8a4');p.s('163,1570 200,1560 225,1490 253,1482','#aaa',1.5);p.s('163,1550 210,1545 253,1490','#7fd6d8',1.5);p.s('355,1600 368,1540 388,1500','#aaa',1.5);p.l('163,1481 388,1481','#9bdcdd',1.5);
 p.pg('163,1520 180,1570 163,1570','#6bb3b5');[118,253,388].forEach(x=>p.r(x,1481,x+45,1620,'#fff','#222',1.2));p.l('118,1553 163,1553','#222',1.4);p.l('388,1505 434,1505','#222',1.4);p.t(141,1527,'1st',11,'#333','middle');p.t(411,1502,'Child',11,'#333','middle',34);p.t(53,1532,'2000',8.5,'#777','end')}
};
const VG='visualization,general';
const rows=[[
['ggQC','Use ggQC to plot single, faceted and multi-|layered quality control charts .','Kenith Grey','QC,XmR,XbarR,SixSigma,Visualization'],
['ggedit','ggedit is aimed to interactively edit ggplot|layers, scales and themes aesthetics','yonicd','visualization,interactive,shiny,general'],
['ggforce','ggforce is aimed at providing missing|functionality to ggplot2 through the extension|system introduced with ggplot2 v2.0.0.','thomasp85',VG],
['ggalt','A compendium of ‘geoms’, ‘coords’ and ‘stats’|for ‘ggplot2’.','hrbrmstr',VG],
['ggiraph','htmlwidget to make ‘ggplot’ graphics|interactive.','davidgohel',VG],
['ggmuller','Creates Muller plots for visualizing evolutionary|dynamics.','robjohnnoble','visualization,evolution,dynamics'],
['ggstance','ggstance implements horizontal versions of|common ggplot2 geoms.','lionel-',VG],
['ggrepel','Repel overlapping text labels away from each|other.','slowkow',VG],
['ggraph','ggraph is tailored at plotting graph-like data|structures (graphs, networks, trees,|hierarchies…).','thomasp85',VG]],[
['ggpmisc','Miscellaneous Extensions to ‘ggplot2’.','',VG],
['geomnet','geomnet implements network visualizations in|ggplot2 via geom_net.','sctyner',VG],
['ggExtra','ggExtra lets you add marginal density plots or|histograms to ggplot2 scatterplots.','daattali','histogram,marginal,density'],
['ggfortify','The unified interface to ggplot2 many popular|statistical pakackage results.','terrytangyuan',VG],
['gganimate','gganimate wraps the animation package to|create animated ggplot2 plots.','dgrtwo',VG],
['plotROC','plotROC provides functions to generate an|interactive ROC curve plot for web use, and print|versions.','sachsmc',VG],
['ggthemes','Some extra geoms, scales, and themes for|ggplot.','jrnold',VG],
['ggspectra','ggspectra extends ggplot2 with stats, geoms|and annotations suitable for light spectra.','',VG],
['ggnetwork','The ggnetwork package provides a way to build|network plots with ggplot2.','briatte',VG]],[
['ggtech','ggplot2 tech themes, scales, and geoms.','ricardo-bion',VG],
['ggradar','ggradar allows you to build radar charts with|ggplot2.','ricardo-bion',VG],
['ggTimeSeries','This R package offers novel time series|visualisations.','Ather-Energy',VG],
['ggseas','Seasonal adjustment on the fly extension for|ggplot2.','ellisp',VG],
['ggsci','A collection of ‘ggplot2’ color palettes inspired|by scientific journals and science fiction TV|shows.','road2stat',VG],
['ggmosaic','ggmosaic implements mosaic plots in ‘ggplot2’|via geom_mosaic.','haleyjeppson',VG],
['survminer','Drawing Survival Curves using ‘ggplot2’','kassambara','visualization,survival'],
['GGally','ggally extends ‘ggplot2’ by adding several|functions to reduce the complexity of|combining geometric objects with transformed|data.','ggobi',VG],
['ggridges','Ridgeline plot geoms for ‘ggplot2’','clauswilke',VG]],[['rowA'],['rowB'],['rowC'],['rowD']]];
const cat='<svg width="14" height="14" viewBox="0 0 14 14" class="flex-shrink-0"><circle cx="7" cy="7" r="6.3" fill="#fff" stroke="#555" stroke-width="1.1"/><path d="M3.2 3l1.9.9q1.9-.4 3.8 0l1.9-.9.3 2.1q.5 1.2-.2 2.6-.6 1-2.4 1.2.5.6.5 1.4v2.2Q7 13.1 5 12.5v-1.2q-1.2.2-1.7-.9l-.5-.6q1 0 1.4.8.4.2.8 0 .1-.9.5-1.7-1.8-.2-2.4-1.2-.7-1.4-.2-2.6z" fill="#4a4a4a"/></svg>';
const bub='<svg class="bub" width="15" height="8" viewBox="0 0 15 8"><path d="M4 1L.7 3.6 4 6.5" fill="none" stroke="#d8d8d8"/><rect x="4.5" y="1" width="10" height="5.4" rx="2.2" fill="#fcfcfc" stroke="#d8d8d8"/></svg>';
rows.forEach((row,j)=>row.forEach((c,i)=>{
 const narrow=i>5,p=new Plot((narrow?[14,523,1032]:[14,532,1050])[i%3],[36,27,30.5,1384][j],narrow?1568/1140:1.4,j<2?3:2.671);
 draw[c[0]](p);
 let info='';
 if(c[1]){
  const link=s=>s?s.split(',').map(t=>`<a>${t}</a>`).join(', '):'';
  info=`<div class="info"><div class="nm d-flex align-items-start"><span>${c[0]}</span><span class="star d-flex align-items-start ms-1">${cat}Star</span>${bub}</div>`+c[1].split('|').map(s=>`<div class="ln dsc">${s}</div>`).join('')+`<div class="ln"><span class="c-r"><i class="sq"></i>author:</span> ${link(c[2])}</div><div class="ln"><span class="c-g"><i class="sq"></i>tags:</span> ${link(c[3])}</div><div class="ln c-b"><i class="sq"></i>js libraries:</div></div>`;
 }
 gallery.insertAdjacentHTML('beforeend',`<div class="cell"><div class="tile"><div class="pic"><svg width="350" height="300" viewBox="0 0 350 300">${p.h}</svg></div>${info}</div></div>`);
}));
</script>
<script src="https://cdn.jsdelivr.net/npm/bootstrap@5.3.0/dist/js/bootstrap.bundle.min.js"></script>
</body>
</html>
